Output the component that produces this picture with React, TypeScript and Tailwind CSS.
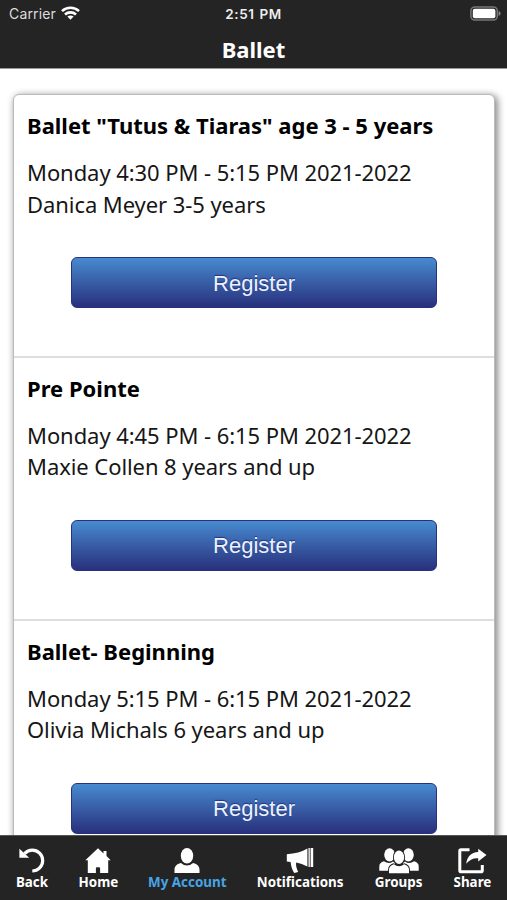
import type { ReactNode } from "react";

const classes = [
  { title: 'Ballet "Tutus & Tiaras" age 3 - 5 years', time: "Monday 4:30 PM - 5:15 PM 2021-2022", info: "Danica Meyer 3-5 years" },
  { title: "Pre Pointe", time: "Monday 4:45 PM - 6:15 PM 2021-2022", info: "Maxie Collen 8 years and up" },
  { title: "Ballet- Beginning", time: "Monday 5:15 PM - 6:15 PM 2021-2022", info: "Olivia Michals 6 years and up" },
];

function StatusBar() {
  return (
    <div className="grid h-7 grid-cols-3 items-center pl-[9px] pr-[6px] font-['Inter',sans-serif] text-[13.5px] leading-4">
      <div className="flex items-center gap-[5px] text-[#dddddd]">
        <span className="text-[14px] tracking-[0.15px]">Carrier</span>
        <svg className="-mt-[2px]" width="19" height="14" viewBox="0 0 19 14" fill="none" stroke="#fff" strokeWidth="2.6">
          <path d="M1 5.1C5.7.6 13.3.6 18 5.1" />
          <path d="M4 8.5C7 5.7 12 5.7 15 8.5" />
          <path d="M9.5 13.8 6.4 10.6Q9.5 8.2 12.6 10.6Z" fill="#fff" stroke="none" />
        </svg>
      </div>
      <div className="pr-[3px] text-center font-semibold tracking-[0.55px] text-[#eeeeee] [word-spacing:1px]">2:51 PM</div>
      <div className="flex justify-end">
        <svg className="-mt-[2px]" width="31" height="15" viewBox="0 0 31 15">
          <rect x=".9" y=".9" width="26.4" height="13.2" rx="4" fill="none" stroke="#777" strokeWidth="1.5" />
          <rect x="2.8" y="2.8" width="22.6" height="9.4" rx="2" fill="#fff" />
          <path d="M28.6 5v5q2-.8 2-2.5t-2-2.5" fill="#888" />
        </svg>
      </div>
    </div>
  );
}

const icons: Record<string, ReactNode> = {
  Back: (
    <svg width="26" height="26" viewBox="0 0 26 26">
      <path d="M5.5 5.6C8 3 10.6 2.1 13.2 2.1a10.2 10.2 0 0 1 .1 20.9" fill="none" stroke="#fff" strokeWidth="3.2" />
      <path d="M.4.8V9.8H10.2Z" fill="#fff" />
    </svg>
  ),
  Home: (
    <svg width="26" height="26" viewBox="0 0 26 26" fill="#fff">
      <path d="M13 .3.3 12.3H2.8V25H10.9V20.3a1 1 0 0 1 1-1h2.2a1 1 0 0 1 1 1V25h8.1V12.3h2.5L21.5 8V3H18.5V5.4Z" />
    </svg>
  ),
  "My Account": (
    <svg width="26" height="26" viewBox="0 0 26 26" fill="#fff">
      <ellipse cx="13" cy="7.8" rx="6.2" ry="7.8" />
      <path d="M.5 25v-3.2c0-3.5 2-5.6 6.4-6.8Q13 20 19.1 15c4.4 1.2 6.4 3.3 6.4 6.8V25Z" />
    </svg>
  ),
  Notifications: (
    <svg width="28" height="26" viewBox="0 0 28 26" fill="#fff">
      <path d="M.8 6.3C9 5.8 16 4 21.4.6v18C17.5 16.6 14 15.4 10.2 14.6c-.6 2.2.4 6.7 2 9.4L8.2 25C6.2 22 5 18 4.6 14L.8 13.5ZM22.5 0h1.3v19h-1.3ZM24.6 0h2.6v19h-2.6Z" />
    </svg>
  ),
  Groups: (
    <svg width="40" height="26" viewBox="0 0 40 26" fill="#fff">
      <ellipse cx="10.6" cy="6.8" rx="5.4" ry="6.6" />
      <ellipse cx="29.4" cy="6.8" rx="5.4" ry="6.6" />
      <path d="M.3 22.8v-4.5q0-3.7 4.6-5 5 3.4 9.1.2l2 1.5v7.8ZM39.7 22.8v-4.5q0-3.7-4.6-5-5 3.4-9.1.2l-2 1.5v7.8Z" />
      <g stroke="#242424" strokeWidth="1.9" paintOrder="stroke">
        <path d="M10 25.2v-3.6q0-3.8 4.8-5.4 5.2 4.2 10.4 0 4.8 1.6 4.8 5.4v3.6Z" />
        <ellipse cx="20" cy="9.2" rx="5.1" ry="6.8" />
      </g>
    </svg>
  ),
  Share: (
    <svg width="29" height="26" viewBox="0 0 29 26">
      <path d="M11.5 1.7H3Q1.8 1.7 1.8 3V22.4q0 1.3 1.3 1.3H23q1.3 0 1.3-1.3V17" fill="none" stroke="#fff" strokeWidth="3" />
      <path d="M20.2.8 28.5 7 20.2 13.5V10.2Q13 9.5 8.2 15.8C9 8.5 13.3 4.3 20.2 4Z" fill="#fff" />
    </svg>
  ),
};

function NavItem({ label, className, active = false }: { label: string; className: string; active?: boolean }) {
  return (
    <button className={`flex shrink-0 flex-col items-center ${className}`}>
      {icons[label]}
      <span className={`-mt-px whitespace-nowrap text-[13.4px] font-bold leading-[18px] ${active ? "text-[#47a5e6]" : "text-white"}`}>{label}</span>
    </button>
  );
}

export default function App() {
  return (
    <div className="flex h-[900px] w-[507px] flex-col overflow-hidden bg-white font-['Noto_Sans',sans-serif] text-black">
      <header className="h-[68px] shrink-0 bg-[#242424] text-white">
        <StatusBar />
        <h1 className="text-center text-[22px] font-bold leading-[42px]">Ballet</h1>
      </header>
      <main className="min-h-0 flex-1 overflow-hidden border-t border-[#999] pl-[13px] pr-[12px] pt-[25px]">
        <div className="rounded-[6px] border border-[#bbb] bg-white shadow-[2px_2px_7px_1px_rgba(0,0,0,0.45)]">
          {classes.map((item) => (
            <section key={item.title} className="h-[262.8px] border-b-2 border-[#dedede] px-[13px] pt-[14px]">
              <h2 className="whitespace-nowrap text-[22px] font-bold leading-8">{item.title}</h2>
              <div className="mt-[16px] whitespace-nowrap text-[22px] leading-[31.5px] tracking-[-0.07px] text-[#161616]">
                <p>{item.time}</p>
                <p>{item.info}</p>
              </div>
              <button className="mx-auto mt-[37px] block h-[51px] w-[366px] rounded-[6px] border border-[#29307d] bg-linear-to-b from-[#478bd0] to-[#29307d] pt-px font-['Liberation_Sans',sans-serif] text-[22px] text-[#edf2ff] [text-shadow:0_-1px_1px_rgba(20,30,100,.7)]">
                Register
              </button>
            </section>
          ))}
        </div>
      </main>
      <nav className="flex h-[65px] shrink-0 justify-between border-t border-[#555] bg-[#242424] pl-[15px] pr-[15px] pt-[12px]">
        <NavItem label="Back" className="w-[34px]" />
        <NavItem label="Home" className="w-[40px]" />
        <NavItem label="My Account" className="w-[79px]" active />
        <NavItem label="Notifications" className="w-[88px]" />
        <NavItem label="Groups" className="w-[50px]" />
        <NavItem label="Share" className="w-[39px]" />
      </nav>
    </div>
  );
}
